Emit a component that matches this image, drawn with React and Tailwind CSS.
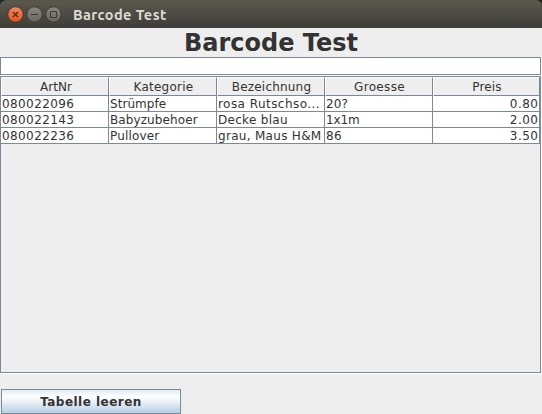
import React from "react";

const columns = [
  { name: "ArtNr", cls: "w-[108px]", head: "pl-0.5" },
  { name: "Kategorie", cls: "w-[108px]", head: "tracking-[0.25px] pl-px" },
  { name: "Bezeichnung", cls: "w-[108px]", head: "tracking-[0.2px] pl-px" },
  { name: "Groesse", cls: "w-[108px]", head: "tracking-[0.35px] pl-px" },
  { name: "Preis", cls: "w-[107px]", head: "tracking-[0.2px] pl-px" },
];

const rows = [
  [
    ["080022096", "tracking-[0.4px]"],
    ["Strümpfe", "tracking-[0.05px]"],
    ["rosa Rutschso...", "tracking-[0.45px]"],
    ["20?", "tracking-[0.1px]"],
    ["0.80", "tracking-[0.5px]"],
  ],
  [
    ["080022143", "tracking-[0.4px]"],
    ["Babyzubehoer", "tracking-[0.1px]"],
    ["Decke blau", "tracking-[0.3px]"],
    ["1x1m", "-tracking-[0.1px]"],
    ["2.00", "tracking-[0.5px]"],
  ],
  [
    ["080022236", "tracking-[0.4px]"],
    ["Pullover", "tracking-[0.15px]"],
    ["grau, Maus H&M", "tracking-[0.3px]"],
    ["86", "tracking-[0.3px]"],
    ["3.50", "tracking-[0.5px]"],
  ],
];

function TitleBar() {
  return (
    <header className="h-7 bg-[#222]">
      <div className="flex h-7 items-center rounded-t-[6px] border-t border-[#56544b] bg-linear-to-b from-[#5b584c] to-[#3e3d39] pl-[7px]">
        <svg width="56" height="18" viewBox="0 0 56 18" fill="none" className="mt-px">
          <defs>
            <linearGradient id="close" x1="0" y1="0" x2="0" y2="1">
              <stop offset="0" stopColor="#f58a63" />
              <stop offset="1" stopColor="#e4511c" />
            </linearGradient>
            <linearGradient id="grey" x1="0" y1="0" x2="0" y2="1">
              <stop offset="0" stopColor="#8b8981" />
              <stop offset="1" stopColor="#65635c" />
            </linearGradient>
          </defs>
          <circle cx="8.5" cy="8.5" r="7.7" fill="url(#close)" stroke="#34322d" strokeWidth="0.8" />
          <circle cx="27.5" cy="8.5" r="7.7" fill="url(#grey)" stroke="#34322d" strokeWidth="0.8" />
          <circle cx="46.5" cy="8.5" r="7.7" fill="url(#grey)" stroke="#34322d" strokeWidth="0.8" />
          <path d="M6 6l5 5M11 6l-5 5" stroke="#5b2714" strokeWidth="1.3" />
          <path d="M24 8.5h7" stroke="#3b3a35" />
          <path d="M43.5 5.5h6v6h-6z" stroke="#3b3a35" />
        </svg>
        <span className="ml-[10px] font-['Ubuntu','Noto_Sans',sans-serif] text-[14.5px] leading-7 font-bold tracking-[0.42px] whitespace-nowrap text-[#dfdbd2]">
          Barcode Test
        </span>
      </div>
    </header>
  );
}

export default function App() {
  return (
    <div className="flex h-[414px] w-[542px] flex-col overflow-hidden bg-[#eee] font-['DejaVu_Sans',sans-serif] text-[12px] text-[#333]">
      <TitleBar />
      <h1 className="h-[29px] pt-px text-center text-[24px] leading-[29px] font-bold whitespace-nowrap">Barcode Test</h1>
      <div className="h-[19px] w-[542px] border-r border-b border-white">
        <input className="block h-[18px] w-[541px] border border-[#7a8a99] bg-white px-px outline-none" />
      </div>
      <div className="h-[298px] w-[542px] border-r border-b border-white">
        <div className="h-[297px] w-[541px] border border-[#7a8a99]">
          <div className="flex h-[19px]">
            {columns.map((c) => (
              <div
                key={c.name}
                className={`${c.cls} h-[19px] border-t border-r border-b border-l border-t-white border-r-[#7a8a99] border-b-[#7a8a99] border-l-white text-center leading-[18px] whitespace-nowrap ${c.head}`}
              >
                {c.name}
              </div>
            ))}
          </div>
          {rows.map((row) => (
            <div key={row[0][0]} className="flex h-4">
              {row.map(([value, tracking], i) => (
                <div
                  key={columns[i].name}
                  className={`${columns[i].cls} h-4 border-r border-b border-[#7a8a99] bg-white pl-px leading-[17px] whitespace-nowrap ${tracking} ${i === 4 ? "pr-[0.5px] text-right" : ""}`}
                >
                  {value}
                </div>
              ))}
            </div>
          ))}
        </div>
      </div>
      <button className="mt-[15px] ml-px h-[25px] w-[180px] shrink-0 border border-[#7a8a99] bg-linear-to-b from-[#e2ecf4] via-white via-30% to-[#b8cfe5] pt-px text-[12px] leading-[22px] font-bold tracking-[0.48px]">
        Tabelle leeren
      </button>
    </div>
  );
}
